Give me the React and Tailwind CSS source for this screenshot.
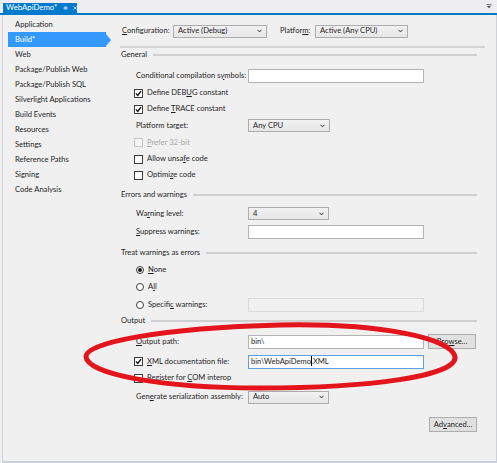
import React from "react";

const U = ({ children }) => (
  <span className="underline decoration-[0.8px] underline-offset-[1px]">{children}</span>
);

const Check = ({ checked, disabled }) => (
  <div
    className={
      "w-[9px] h-[9px] border flex items-center justify-center shrink-0 " +
      (disabled ? "border-[#c6c6c6] bg-[#f4f4f4]" : "border-[#3c3c3c] bg-white")
    }
  >
    {checked && (
      <svg width="7" height="7" viewBox="0 0 7 7">
        <path d="M1 3.6 L2.8 5.4 L6 1.2" stroke="#111" strokeWidth="1.4" fill="none" />
      </svg>
    )}
  </div>
);

const Radio = ({ checked }) => (
  <div className="w-[8px] h-[8px] rounded-full border border-[#3c3c3c] bg-white flex items-center justify-center shrink-0">
    {checked && <div className="w-[4px] h-[4px] rounded-full bg-[#1a1a1a]" />}
  </div>
);

const Chevron = () => (
  <svg width="5" height="4" viewBox="0 0 5 4" className="shrink-0">
    <path d="M0.5 0.8 L2.5 2.9 L4.5 0.8" stroke="#333" strokeWidth="1" fill="none" />
  </svg>
);

const Select = ({ value, w }) => (
  <div
    className={
      "h-[13px] border border-[#acacac] bg-gradient-to-b from-[#f2f2f2] to-[#e6e6e6] flex items-center justify-between pl-[4px] pr-[4px] shrink-0 " +
      w
    }
  >
    <span>{value}</span>
    <Chevron />
  </div>
);

const Input = ({ children, focus, disabled }) => (
  <div
    className={
      "h-[14px] w-[176px] border flex items-center pl-[2px] shrink-0 " +
      (focus
        ? "border-[#5aa1e6] bg-white"
        : disabled
        ? "border-[#d9d9d9] bg-[#f0f0f0]"
        : "border-[#b4b4b4] bg-white")
    }
  >
    {children}
  </div>
);

const Button = ({ children }) => (
  <div className="h-[15px] w-[48px] border border-[#adadad] bg-[#e1e1e1] flex items-center justify-center shrink-0">
    {children}
  </div>
);

const Section = ({ title, mt }) => (
  <div className={"h-[14px] flex items-center pl-[11px] pr-[19px] " + mt}>
    <span className="whitespace-nowrap">{title}</span>
    <div className="flex-1 ml-[6px] h-[1.5px] bg-[#cfcfcf]" />
  </div>
);

const LabelRow = ({ label, mt, children }) => (
  <div className={"h-[14px] flex items-center pl-[26px] " + mt}>
    <div className="w-[112px] whitespace-nowrap">{label}</div>
    {children}
  </div>
);

const CheckRow = ({ checked, disabled, label, mt, children }) => (
  <div className={"h-[14px] flex items-center pl-[24px] " + mt}>
    <Check checked={checked} disabled={disabled} />
    <div className={"ml-[4px] whitespace-nowrap " + (disabled ? "text-[#a8a8a8] " : "") + (children ? "w-[101px]" : "")}>
      {label}
    </div>
    {children}
  </div>
);

const RadioRow = ({ checked, label, mt, children }) => (
  <div className={"h-[14px] flex items-center pl-[26px] " + mt}>
    <Radio checked={checked} />
    <div className={"ml-[4px] whitespace-nowrap " + (children ? "w-[100px]" : "")}>{label}</div>
    {children}
  </div>
);

const navItems = [
  "Application",
  "Build*",
  "Web",
  "Package/Publish Web",
  "Package/Publish SQL",
  "Silverlight Applications",
  "Build Events",
  "Resources",
  "Settings",
  "Reference Paths",
  "Signing",
  "Code Analysis",
];

export default function App() {
  return (
    <div className="relative w-[497px] h-[463px] bg-[#f0f0f0] overflow-hidden font-['Lato','Segoe_UI',sans-serif] text-[7.6px] leading-none text-[#1e1e1e]">
      {/* Top tab bar */}
      <div className="h-[15px] bg-[#eeeef2] border-b-2 border-[#007acc] flex items-end justify-between">
        <div className="ml-[3px] h-[10px] w-[74px] bg-[#007acc] text-white flex items-center pl-[3px] text-[7.8px]">
          <span>WebApiDemo*</span>
          <svg width="7" height="6" viewBox="0 0 7 6" className="ml-[6px]">
            <path d="M0.5 3 H2.5 M2.5 1 V5 M2.5 1.5 H5 V4.5 H2.5 M5 3 H6.5" stroke="white" strokeWidth="0.9" fill="none" />
          </svg>
          <svg width="6" height="6" viewBox="0 0 6 6" className="ml-[4px]">
            <path d="M0.8 0.8 L5.2 5.2 M5.2 0.8 L0.8 5.2" stroke="white" strokeWidth="1" fill="none" />
          </svg>
        </div>
        <svg width="6" height="5" viewBox="0 0 6 5" className="mr-[5px] mb-[4px]">
          <path d="M0.5 0.7 H5.5" stroke="#555" strokeWidth="0.9" />
          <path d="M1 2 H5 L3 4.2 Z" fill="#555" />
        </svg>
      </div>

      {/* Body */}
      <div className="ml-[2px] h-[448px] border-l border-r border-b-2 border-[#cdd1dc] flex">
        {/* Left nav */}
        <div className="w-[107px] shrink-0 flex flex-col pt-[2px]">
          {navItems.map((item) => {
            const sel = item === "Build*";
            return (
              <div
                key={item}
                className={
                  "relative h-[15px] flex items-center ml-[5px] pl-[7px] w-[98px] whitespace-nowrap " +
                  (sel ? "bg-[#3399ff] text-white" : "")
                }
              >
                {item}
                {sel && (
                  <div className="absolute right-[-5px] top-[1.5px] w-0 h-0 border-y-[6px] border-y-transparent border-l-[5px] border-l-[#3399ff]" />
                )}
              </div>
            );
          })}
        </div>

        {/* Main */}
        <div className="flex-1 flex flex-col">
          {/* Header */}
          <div className="mt-[9px] h-[14px] flex items-center pl-[12px]">
            <span className="w-[51px] whitespace-nowrap">
              <U>C</U>onfiguration:
            </span>
            <Select value="Active (Debug)" w="w-[94px]" />
            <span className="ml-[13px] w-[35px] whitespace-nowrap">
              Platfor<U>m</U>:
            </span>
            <Select value="Active (Any CPU)" w="w-[93px]" />
          </div>
          <div className="mt-[8px] ml-[10px] mr-[11px] h-[2px] bg-[#d4d4d4]" />

          <Section title="General" mt="mt-[0px]" />
          <LabelRow
            mt="mt-[6.5px]"
            label={
              <>
                Conditional compilation s<U>y</U>mbols:
              </>
            }
          >
            <Input />
          </LabelRow>
          <CheckRow mt="mt-[3.5px]" checked label={<>Define DEB<U>U</U>G constant</>} />
          <CheckRow mt="mt-[2px]" checked label={<>Define <U>T</U>RACE constant</>} />
          <LabelRow mt="mt-[2.5px]" label="Platform target:">
            <Select value="Any CPU" w="w-[82px]" />
          </LabelRow>
          <CheckRow mt="mt-[3px]" disabled label={<><U>P</U>refer 32-bit</>} />
          <CheckRow mt="mt-[2.5px]" label={<>Allow unsa<U>f</U>e code</>} />
          <CheckRow mt="mt-[2px]" label={<>Optimi<U>z</U>e code</>} />

          <Section title="Errors and warnings" mt="mt-[6px]" />
          <LabelRow mt="mt-[4.5px]" label={<>Wa<U>r</U>ning level:</>}>
            <Select value="4" w="w-[81px]" />
          </LabelRow>
          <LabelRow mt="mt-[4.5px]" label={<><U>S</U>uppress warnings:</>}>
            <Input />
          </LabelRow>

          <Section title="Treat warnings as errors" mt="mt-[7px]" />
          <RadioRow mt="mt-[3px]" checked label={<><U>N</U>one</>} />
          <RadioRow mt="mt-[2.5px]" label={<>A<U>l</U>l</>} />
          <RadioRow mt="mt-[4px]" label={<>Specifi<U>c</U> warnings:</>}>
            <Input disabled />
          </RadioRow>

          <Section title="Output" mt="mt-[2.5px]" />
          <LabelRow mt="mt-[6.5px]" label={<><U>O</U>utput path:</>}>
            <Input>bin\</Input>
            <div className="ml-[4px]">
              <Button>
                Bro<U>w</U>se...
              </Button>
            </div>
          </LabelRow>
          <CheckRow mt="mt-[6px]" checked label={<><U>X</U>ML documentation file:</>}>
            <Input focus>
              <span>bin\WebApiDemo</span>
              <span className="relative">
                .
                <span className="absolute left-[0px] top-[-2px] h-[10px] w-px bg-black" />
              </span>
              <span>XML</span>
            </Input>
          </CheckRow>
          <CheckRow mt="mt-[2.5px]" label={<>Register for <U>C</U>OM interop</>} />
          <LabelRow mt="mt-[5px]" label={<>Gen<U>e</U>rate serialization assembly:</>}>
            <Select value="Auto" w="w-[81px]" />
          </LabelRow>
          <div className="mt-[13px] h-[14px] flex justify-end pr-[19px]">
            <Button>
              Ad<U>v</U>anced...
            </Button>
          </div>
        </div>
      </div>

      {/* Red hand-drawn ellipse overlay */}
      <svg
        className="absolute left-0 top-0 pointer-events-none"
        width="497"
        height="463"
        viewBox="0 0 497 463"
      >
        <path
          d="M 86 357 C 84 343, 160 328, 280 325 C 380 323, 452 338, 455 357 C 457 376, 370 388, 260 388 C 160 388, 88 374, 86 357 Z"
          stroke="#e3141b"
          strokeWidth="5"
          fill="none"
        />
      </svg>
    </div>
  );
}
